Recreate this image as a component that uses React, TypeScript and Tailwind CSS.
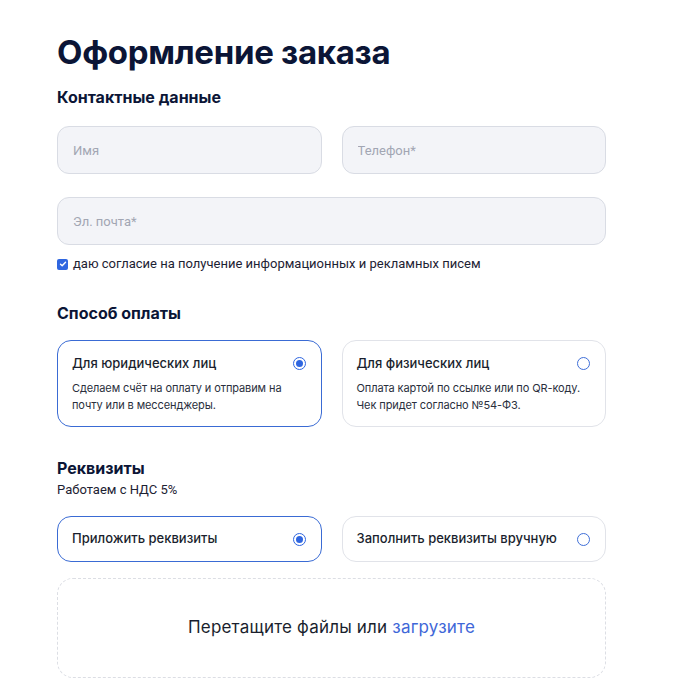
import { useState } from "react";

const Radio = ({ checked }: { checked: boolean }) => (
    <span className={`flex h-[13px] w-[13px] shrink-0 items-center justify-center rounded-full border ${checked ? "border-[#2f66e0]" : "border-[#3f6fd8]"}`}>
        {checked && <span className="h-[7px] w-[7px] rounded-full bg-[#2f66e0]" />}
    </span>
);

const Field = ({ placeholder, className = "" }: { placeholder: string; className?: string }) => (
    <input
        placeholder={placeholder}
        className={`h-[48px] rounded-[12px] border border-[#d9dce4] bg-[#f3f4f8] px-[15px] text-[13px] text-[#1a1f36] outline-none placeholder:text-[#a2a6b3] ${className}`}
        style={{ fontFamily: "Roboto, sans-serif" }}
    />
);

export default function App() {
    const [payment, setPayment] = useState("legal");
    const [details, setDetails] = useState("attach");
    const [agree, setAgree] = useState(true);

    return (
        <div className="min-h-[697px] bg-white text-[#0f1733]" style={{ fontFamily: "Inter, 'Noto Sans', sans-serif" }}>
            <div className="ml-[57px] w-[549px] pt-[31px]">
                <h1 className="text-[33px] font-bold leading-[42px] tracking-[-0.3px] text-[#0b1536]">Оформление заказа</h1>
                <h2 className="mt-[14px] text-[16px] font-bold leading-[20px] text-[#0b1536]">Контактные данные</h2>

                <div className="mt-[19px] grid grid-cols-2 gap-x-[20px]">
                    <Field placeholder="Имя" />
                    <Field placeholder="Телефон*" />
                </div>
                <Field placeholder="Эл. почта*" className="mt-[23px] w-full" />

                <label className="mt-[11px] flex cursor-pointer items-center gap-[5px] text-[13px] leading-[16px] text-[#1d2233]" style={{ fontFamily: "Roboto, sans-serif" }}>
                    <span
                        onClick={() => setAgree(!agree)}
                        className={`flex h-[11px] w-[11px] items-center justify-center rounded-[2px] ${agree ? "bg-[#2f66e0]" : "border border-gray-400"}`}
                    >
                        {agree && (
                            <svg width="8" height="8" viewBox="0 0 8 8" fill="none">
                                <path d="M1.5 4.2L3.2 5.8L6.5 2.3" stroke="white" strokeWidth="1.4" strokeLinecap="round" strokeLinejoin="round" />
                            </svg>
                        )}
                    </span>
                    даю согласие на получение информационных и рекламных писем
                </label>

                <h2 className="mt-[31px] text-[16px] font-bold leading-[20px] text-[#0b1536]">Способ оплаты</h2>
                <div className="mt-[17px] grid grid-cols-2 gap-x-[20px]">
                    {[
                        { id: "legal", title: "Для юридических лиц", text: ["Сделаем счёт на оплату и отправим на", "почту или в мессенджеры."] },
                        { id: "person", title: "Для физических лиц", text: ["Оплата картой по ссылке или по QR-коду.", "Чек придет согласно №54-ФЗ."] },
                    ].map((item) => (
                        <div
                            key={item.id}
                            onClick={() => setPayment(item.id)}
                            className={`h-[87px] cursor-pointer rounded-[14px] border px-[14px] pt-[14px] ${payment === item.id ? "border-[#3a6bd4]" : "border-[#e1e3e9]"}`}
                        >
                            <div className="flex items-center justify-between pr-[1px]">
                                <span className="text-[13px] font-medium leading-[16px] text-[#1a1f2e]">{item.title}</span>
                                <Radio checked={payment === item.id} />
                            </div>
                            <p className="mt-[9px] text-[11px] leading-[17px] tracking-[-0.1px] text-[#2a2f3d]">
                                {item.text[0]}
                                <br />
                                {item.text[1]}
                            </p>
                        </div>
                    ))}
                </div>

                <h2 className="mt-[31px] text-[16px] font-bold leading-[20px] text-[#0b1536]">Реквизиты</h2>
                <p className="mt-[4px] text-[13px] leading-[16px] text-[#1d2233]" style={{ fontFamily: "Roboto, sans-serif" }}>Работаем с НДС 5%</p>
                <div className="mt-[18px] grid grid-cols-2 gap-x-[20px]">
                    {[
                        { id: "attach", title: "Приложить реквизиты" },
                        { id: "manual", title: "Заполнить реквизиты вручную" },
                    ].map((item) => (
                        <div
                            key={item.id}
                            onClick={() => setDetails(item.id)}
                            className={`flex h-[46px] cursor-pointer items-center justify-between rounded-[14px] border pl-[14px] pr-[15px] ${details === item.id ? "border-[#3a6bd4]" : "border-[#e1e3e9]"}`}
                        >
                            <span className="text-[13px] font-medium text-[#1a1f2e]">{item.title}</span>
                            <Radio checked={details === item.id} />
                        </div>
                    ))}
                </div>

                <div className="mt-[16px] flex h-[100px] items-center justify-center rounded-[16px] border border-dashed border-[#dcdee4]">
                    <span className="text-[17px] tracking-[0.2px] text-[#1a1f2e]">
                        Перетащите файлы или <span className="cursor-pointer text-[#3f67d8]">загрузите</span>
                    </span>
                </div>
            </div>
        </div>
    );
}
